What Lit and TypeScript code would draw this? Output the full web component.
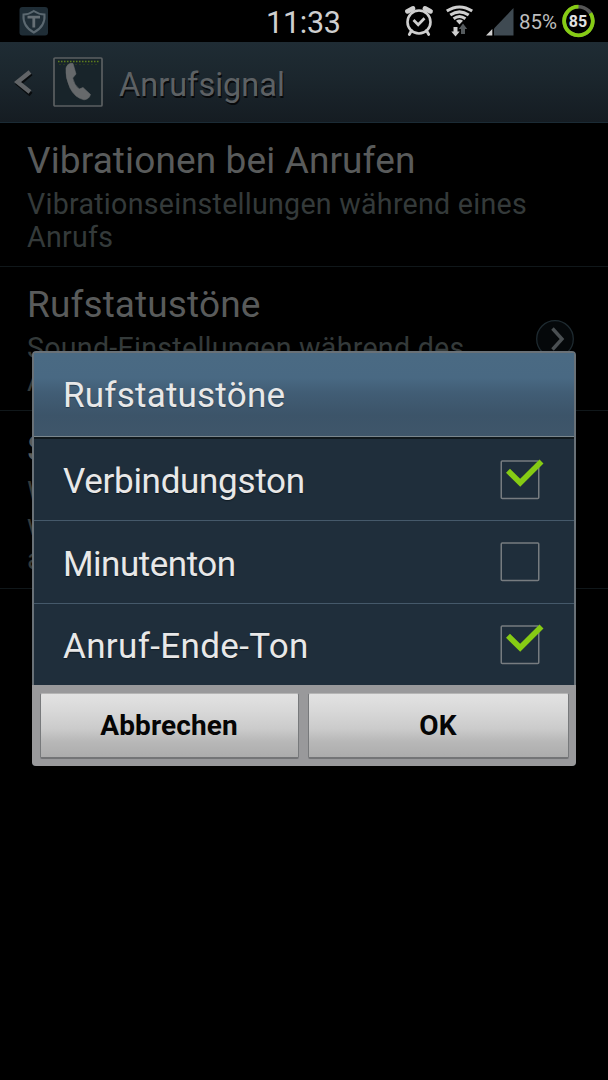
import { LitElement, html, css, svg, nothing } from "lit";
import { customElement, state } from "lit/decorators.js";

@customElement("status-bar")
class StatusBar extends LitElement {
  static styles = css`
    :host { display: grid; grid-template-columns: 265px 138px 1fr; height: 42px; align-items: start; background: #000; color: #cfcfcf; }
    svg { display: block; flex: none; }
    .shield { margin: 6px 0 0 18px; }
    .clock { font-size: 30.5px; line-height: 46px; letter-spacing: -0.25px; padding-left: 1px; }
    .icons { display: flex; }
    .alarm { margin-right: 10px; }
    .wifi { margin-right: 11px; }
    .level { margin-right: 5px; }
    .percent { font-size: 20.5px; line-height: 44px; letter-spacing: 0; width: 43px; color: #bdbdbd; white-space: nowrap; }
    .count { font: 700 16px Roboto, "Open Sans", sans-serif; fill: #e2e2e2; }
  `;
  render() {
    return html`
      <svg class="shield" width="32" height="32" viewBox="18 6 32 32">
        <rect x="19.500" y="7" width="28.500" height="28.500" rx="3" fill="#1f2d36" />
        <path d="M33.800 11Q39 14.500 44.500 14.500Q45.500 26.500 33.800 32.500Q22.500 26.500 23.500 14.500Q29 14.500 33.800 11Z" fill="none" stroke="#5b6870" stroke-width="2" />
        <path d="M27.500 17.200H40M33.800 17.200V27.500" stroke="#666f75" stroke-width="2.800" />
      </svg>
      <span class="clock">11:33</span>
      <div class="icons">
        <svg class="alarm" width="32" height="42" viewBox="403 0 32 42" fill="none" stroke="#cfcfcf">
          <circle cx="419" cy="22" r="11.500" stroke-width="2.600" />
          <path d="M413.500 20L418.200 24.800L424.500 18.200" stroke-width="2.700" />
          <path d="M407.500 11.300L413 8.500M430.500 11.300L425 8.500" stroke-width="4.800" stroke-linecap="round" />
          <path d="M411.500 30.500L409.300 34.500M426.500 30.500L428.700 34.500" stroke-width="2.800" stroke-linecap="round" />
        </svg>
        <svg class="wifi" width="30" height="42" viewBox="445 0 30 42" fill="none" stroke="#cfcfcf" stroke-width="3">
          <path d="M446.800 11.100Q459.500 3 472.200 11.100M450.300 15.100Q459.500 8.600 468.700 15.100M453.600 18.800Q459.500 14.200 465.400 18.800" />
          <path d="M456 20.800Q459.500 18.200 463 20.800L459.500 24.500Z" fill="#cfcfcf" stroke="none" />
          <path d="M453.500 27H457.500V31.500H459.700L455.500 36.500L451.300 31.500H453.500Z" fill="#cfcfcf" stroke="none" />
          <path d="M461 34V29H458.800L463 23.500L467.200 29H465V34Z" fill="#555a5d" stroke="none" />
        </svg>
        <svg class="level" width="28" height="42" viewBox="486 0 28 42">
          <path d="M494 28.500L513.500 8V35.500H494Z" fill="#3f4a52" />
          <path d="M486 35.500L492.300 29V35.500Z" fill="#cfcfcf" />
        </svg>
        <span class="percent">85%</span>
        <svg width="34" height="42" viewBox="561 0 34 42">
          <circle cx="577.500" cy="21" r="14.300" fill="none" stroke="#555" stroke-width="3.600" />
          <path d="M589.500 13.300A14.300 14.300 0 1 1 577.500 6.700" fill="none" stroke="#86cc14" stroke-width="3.800" />
          <text class="count" x="577" y="26.700" text-anchor="middle">85</text>
        </svg>
      </div>`;
  }
}

@customElement("action-bar")
class ActionBar extends LitElement {
  static styles = css`
    :host { display: flex; align-items: center; height: 80px; padding: 0 14px; background: linear-gradient(#1f2c34, #1b262d 45%, #151c22); border-bottom: 1px solid #1b2b35; color: #5d6164; }
    svg { display: block; flex: none; }
    .back { margin-right: 19px; }
    .title { margin: 5px 0 0 16px; font-size: 32.5px; line-height: 40px; letter-spacing: 0; text-shadow: 1px 2px 0 #07090b; }
  `;
  render() {
    return html`
      <svg class="back" width="20" height="30" viewBox="14 68 20 30" fill="none" stroke-width="4.500">
        <path d="M31 74.500L18.500 85L31 95.500" stroke="#080b0d" />
        <path d="M30 73L17.500 83L30 93" stroke="#616467" />
      </svg>
      <svg width="50" height="50" viewBox="0 0 50 50">
        <rect x="1" y="1" width="48" height="48" rx="1" fill="#18242a" stroke="#5b5f61" stroke-width="1.700" />
        <path d="M5 4.500H46" stroke="#5d7e1c" stroke-width="1.300" stroke-dasharray="1.500 1.500" />
        <path d="M6.500 7.500H45" stroke="#3d511d" stroke-width="1" stroke-dasharray="1 3" />
        <path d="M13 11Q15 5.500 20 6.500L23 17L19.700 21Q21 28 26.300 32L30 30.500L37.500 37.500Q36 42.500 31 42.800Q22 41 17 31Q12 20 13 11Z" fill="#66696b" stroke="#66696b" stroke-width="0.600" />
      </svg>
      <span class="title">Anrufsignal</span>`;
  }
}

@customElement("setting-row")
class SettingRow extends LitElement {
  static properties = { heading: {}, lines: { attribute: false }, arrow: { type: Boolean } };
  declare heading: string;
  declare lines: string[];
  declare arrow: boolean;
  static styles = css`
    :host { display: flex; justify-content: space-between; align-items: center; box-sizing: border-box; border-bottom: 1px solid #10171a; padding: 0 33px 0 27px; }
    .copy { align-self: flex-start; padding-top: 17px; white-space: nowrap; }
    .heading { font-size: 37px; line-height: 42px; letter-spacing: 0.12px; color: #595b5b; margin-bottom: 5.5px; }
    .line { font-size: 28.6px; line-height: 33.5px; letter-spacing: 0.27px; color: #343a3a; }
    svg { display: block; flex: none; }
  `;
  render() {
    return html`
      <div class="copy">
        <div class="heading">${this.heading}</div>
        ${this.lines.map((l) => html`<div class="line">${l}</div>`)}
      </div>
      ${this.arrow ? html`<svg width="40" height="40" viewBox="0 0 40 40" fill="none">
        <circle cx="20" cy="20" r="18.300" fill="#05080a" stroke="#1e2a30" stroke-width="1.300" />
        <path d="M17.500 9.500L27 20L17.500 30.500" stroke="#4a4f52" stroke-width="3.400" />
      </svg>` : nothing}`;
  }
}

@customElement("tone-dialog")
class ToneDialog extends LitElement {
  static styles = css`
    :host { display: block; box-sizing: border-box; border-radius: 4px; overflow: hidden; background: #1f2e3b; color: #e8e8e8; font-size: 35px; }
    .frame { border: 2px solid #697177; border-bottom: 0; border-radius: 4px 4px 0 0; }
    .head { height: 83px; box-sizing: border-box; padding: 0 29px; line-height: 85px; letter-spacing: 0.22px; background: linear-gradient(#4a6a83 0%, #496983 30%, #415d75 48%, #3c5469 75%, #3f566a 100%); text-shadow: 0 1px 1px #293c4b; }
    .rule { height: 1px; background: #7b878d; border-bottom: 2px solid #10181c; }
    .row { display: flex; justify-content: space-between; align-items: center; height: 82px; padding: 0 30px 0 29px; border-bottom: 1px solid #45596a; }
    .row:first-child { height: 81px; }
    .row:last-child { border-bottom: 0; height: 81px; }
    .label { padding-top: 4px; letter-spacing: var(--track); text-shadow: 0 1px 1px #101b23; }
    svg { display: block; flex: none; }
    .foot { display: grid; grid-template-columns: 259px 261px; gap: 9px; height: 81px; box-sizing: border-box; padding: 8px 7px 7px 8px; background: #99999b; }
    button { font: 700 28px/62px Roboto, sans-serif; letter-spacing: 0.1px; height: 66px; padding: 1px 1px 0 0; color: #050505; border: 1px solid #77797b; border-top-color: #b5b5b5; border-bottom: 2px solid #737476; border-radius: 2px; background: linear-gradient(#e2e2e2, #d9d9d9 25%, #cbcbcb 55%, #b8b8b8 75%, #acacac); }
  `;
  @state() items = [
    { name: "Verbindungston", on: true, track: "-0.3px" },
    { name: "Minutenton", on: false, track: "-0.48px" },
    { name: "Anruf-Ende-Ton", on: true, track: "0.35px" },
  ];
  render() {
    return html`
      <div class="frame">
        <div class="head">Rufstatustöne</div>
        <div class="rule"></div>
        <div>${this.items.map((i) => html`
          <div class="row">
            <span class="label" style="--track:${i.track}">${i.name}</span>
            <svg width="48" height="48" viewBox="-4.500 -4.500 48 48" fill="none">
              <rect x="0.750" y="0.400" width="37.500" height="37.500" rx="1" stroke="#777c80" stroke-width="1.500" />
              ${i.on ? svg`<path d="M7.500 10.200L19.700 22.300L41 1" stroke="#86cb14" stroke-width="5.600" />` : nothing}
            </svg>
          </div>`)}</div>
      </div>
      <div class="foot"><button>Abbrechen</button><button>OK</button></div>`;
  }
}

@customElement("app-root")
class AppRoot extends LitElement {
  static styles = css`
    :host { display: block; position: relative; width: 608px; height: 1080px; overflow: hidden; background: #000; font-family: Roboto, sans-serif; }
    .row { height: 144px; }
    .tall { height: 178px; }
    tone-dialog { position: absolute; left: 32px; top: 351px; width: 544px; height: 415px; }
  `;
  render() {
    return html`
      <status-bar></status-bar>
      <action-bar></action-bar>
      <setting-row class="row" heading="Vibrationen bei Anrufen" .lines=${["Vibrationseinstellungen während eines", "Anrufs"]}></setting-row>
      <setting-row class="row" heading="Rufstatustöne" .lines=${["Sound-Einstellungen während des", "A"]} arrow></setting-row>
      <setting-row class="tall" heading="S" .lines=${["W", "w", "a"]}></setting-row>
      <tone-dialog></tone-dialog>`;
  }
}
